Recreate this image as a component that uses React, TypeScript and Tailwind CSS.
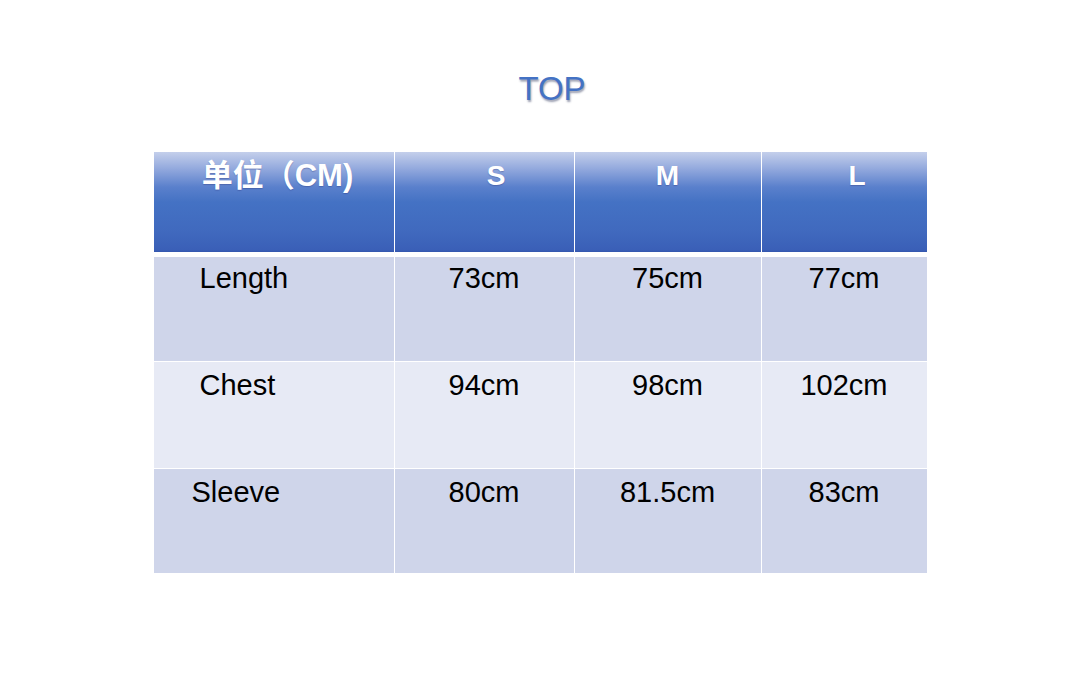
const header = [
  { label: "单位（CM)", cls: "pl-[8px] text-[31px] pt-[8px]" },
  { label: "S", cls: "pl-[24px] text-[28px] pt-[8px]" },
  { label: "M", cls: "text-[28px] pt-[8px]" },
  { label: "L", cls: "pl-[26px] text-[28px] pt-[8px]" },
];

const rows = [
  { name: "Length", pad: "pl-[46px]", bg: "bg-[#cfd5ea]", h: "h-[104px]", top: "pt-[5px]", values: ["73cm", "75cm", "77cm"] },
  { name: "Chest", pad: "pl-[46px]", bg: "bg-[#e7eaf5]", h: "h-[106px]", top: "pt-[7px]", values: ["94cm", "98cm", "102cm"] },
  { name: "Sleeve", pad: "pl-[38px]", bg: "bg-[#cfd5ea]", h: "h-[104px]", top: "pt-[7px]", values: ["80cm", "81.5cm", "83cm"] },
];

const cols = "grid grid-cols-[240px_179px_186px_165px] gap-x-px";

export default function App() {
  return (
    <div className="w-[1080px] h-[700px] bg-white font-['Liberation_Sans','Noto_Sans_CJK_SC',sans-serif] flex flex-col items-center">
      <h1 className="mt-[70px] pl-[24px] text-[33px] leading-[37px] font-normal text-[#4472c4] [text-shadow:1px_2px_2px_rgba(30,40,80,0.45)]">
        TOP
      </h1>

      <div className="mt-[45px] w-[773px] flex flex-col">
        <div className={`${cols} h-[100px]`}>
          {header.map((c) => (
            <div
              key={c.label}
              className={`bg-[linear-gradient(to_bottom,#c4cfeb_0%,#8fa6dc_18%,#5a80cc_35%,#4472c4_50%,#4069be_80%,#3a5fb7_98%,#3356ad_100%)] text-center text-white font-bold leading-[32px] [text-shadow:0_1px_1px_rgba(40,50,120,0.35)] ${c.cls}`}
            >
              {c.label}
            </div>
          ))}
        </div>

        <div className="mt-[5px] flex flex-col gap-y-px">
          {rows.map((r) => (
            <div key={r.name} className={`${cols} ${r.h}`}>
              <div className={`${r.bg} ${r.pad} ${r.top} text-black text-[29px] leading-[33px]`}>{r.name}</div>
              {r.values.map((v) => (
                <div key={v} className={`${r.bg} ${r.top} text-center text-black text-[29px] leading-[33px]`}>
                  {v}
                </div>
              ))}
            </div>
          ))}
        </div>
      </div>
    </div>
  );
}
